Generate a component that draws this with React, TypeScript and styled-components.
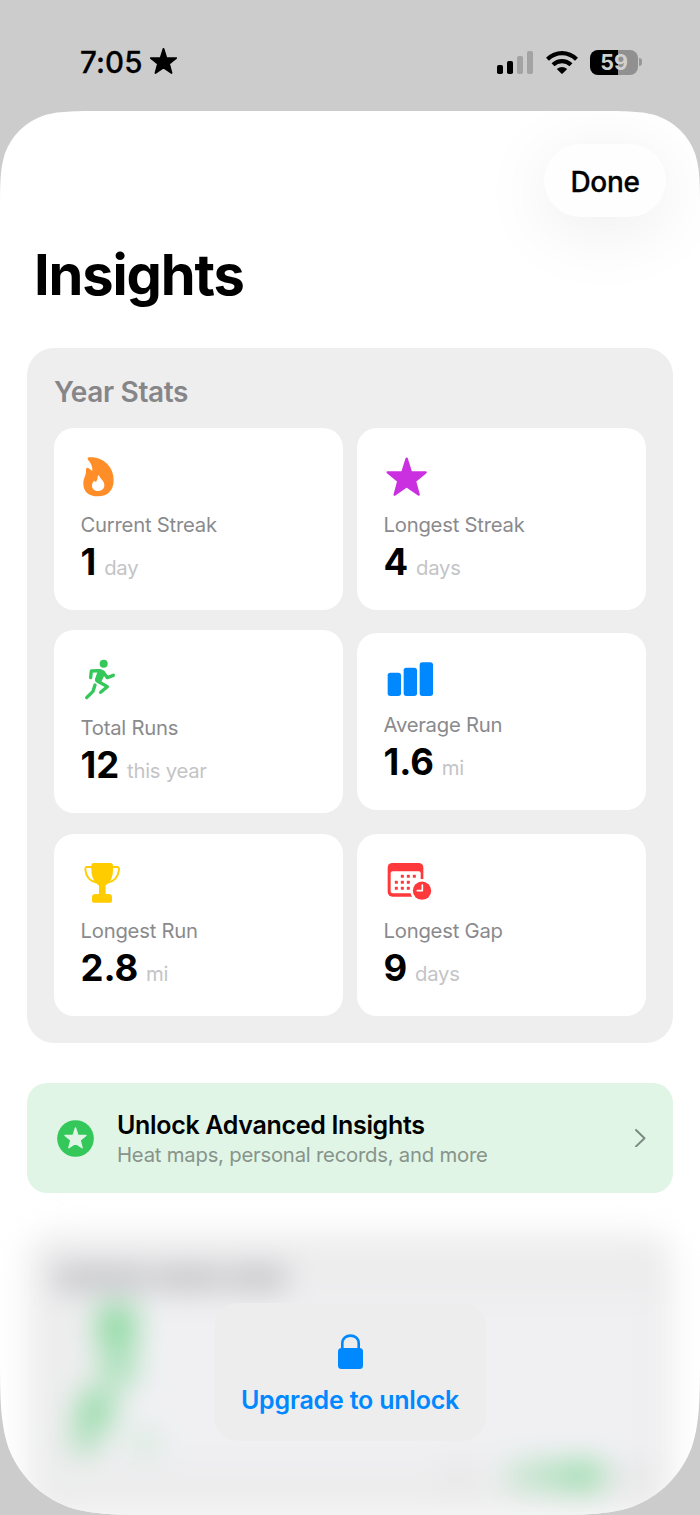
import React from 'react';
import styled, { createGlobalStyle } from 'styled-components';

const GlobalStyle = createGlobalStyle`
  * { box-sizing: border-box; }
  body {
    margin: 0;
    background: #ccc;
    font-family: Inter, "Liberation Sans", sans-serif;
    color: #000;
  }
`;

const Screen = styled.div`
  width: 700px;
  height: 1515px;
  overflow: hidden;
  background: #cccccc;
  display: flex;
  flex-direction: column;
`;

const StatusBar = styled.header`
  height: 111px;
  flex: none;
  display: flex;
  justify-content: space-between;
  padding: 42px 58px 29px 80px;
`;

const StatusGroup = styled.div<{ $gap: number }>`
  display: flex;
  align-items: center;
  height: 40px;
  gap: ${(p) => p.$gap}px;
`;

const TimeStar = styled.div`
  display: flex;
  margin-bottom: 2px;
`;

const Clock = styled.span`
  font-size: 29.5px;
  font-weight: 550;
  letter-spacing: 0.1px;
  line-height: 40px;
  -webkit-text-stroke: 0.3px #000;
`;

const Battery = styled.div`
  width: 48px;
  height: 25px;
  border-radius: 8px;
  background: linear-gradient(90deg, #000 28px, #909090 28px);
  color: #d0d0d0;
  font-size: 21.5px;
  font-weight: 700;
  line-height: 25px;
  text-align: center;
`;

const BatteryTip = styled.i`
  width: 3px;
  height: 8px;
  margin-left: 1px;
  border-radius: 0 3px 3px 0;
  background: #969696;
`;

const BatteryGroup = styled.div`
  display: flex;
  align-items: center;
`;

const Sheet = styled.main`
  width: 700px;
  height: 1404px;
  flex: none;
  background: #fff;
  padding: 33px 27px 0;
  display: flex;
  flex-direction: column;
  clip-path: path("M0 102.4 C0 72.9 0 58.2 5 42.3 C11.3 25 25 11.3 42.3 5 C58.2 0 72.9 0 102.4 0 H597.6 C627.1 0 641.8 0 657.7 5 C675 11.3 688.7 25 695 42.3 C700 58.2 700 72.9 700 102.4 V1239 C700 1286.4 700 1310.2 691.9 1335.8 C681.7 1363.7 659.7 1385.7 631.8 1395.9 C606.2 1404 582.4 1404 535 1404 H165 C117.6 1404 93.8 1404 68.2 1395.9 C40.3 1385.7 18.3 1363.7 8.1 1335.8 C0 1310.2 0 1286.4 0 1239 Z");
`;

const DoneButton = styled.button`
  align-self: flex-end;
  flex: none;
  width: 122px;
  height: 73px;
  margin-right: 7px;
  padding: 2px 0 0;
  border: 0;
  border-radius: 37px;
  background: #fefefe;
  box-shadow: 0 12px 72px rgba(0, 0, 0, 0.08);
  font: 550 28px/36px Inter, sans-serif;
  letter-spacing: -0.35px;
  -webkit-text-stroke: 0.3px #000;
  color: #000;
`;

const Title = styled.h1`
  margin: 24px 0 0 7px;
  font-size: 56px;
  font-weight: 700;
  line-height: 68px;
  letter-spacing: -1.15px;
`;

const Panel = styled.section`
  margin-top: 39px;
  height: 695px;
  flex: none;
  padding: 28px 27px 27px;
  border-radius: 27px;
  background: #eeeeee;
`;

const PanelTitle = styled.h2`
  margin: 0 0 19px;
  font-size: 28px;
  font-weight: 600;
  line-height: 33px;
  letter-spacing: -0.35px;
  color: #868689;
`;

const StatGrid = styled.div`
  display: grid;
  grid-template-columns: 1fr 1fr;
  column-gap: 14px;
  row-gap: 20.3px;
  align-items: center;
`;

const Card = styled.article`
  padding: 27px;
  border-radius: 20px;
  background: #fff;
`;

const IconBox = styled.div<{ $height: number }>`
  height: ${(p) => p.$height}px;
  margin-bottom: 16px;

  svg {
    display: block;
    overflow: visible;
  }
`;

const Label = styled.div`
  margin-left: -0.5px;
  font-size: 20.3px;
  line-height: 27px;
  letter-spacing: -0.24px;
  color: #8a8a8d;
`;

const ValueRow = styled.div`
  display: flex;
  align-items: baseline;
  gap: 8px;
  height: 42px;
  margin-top: 3px;
`;

const Value = styled.strong`
  margin-left: -0.5px;
  font-size: 36.5px;
  font-weight: 700;
  line-height: 43px;
  letter-spacing: -0.1px;
`;

const Unit = styled.span`
  font-size: 20.3px;
  line-height: 27px;
  letter-spacing: -0.26px;
  color: #c4c4c6;
`;

const Banner = styled.section`
  display: flex;
  align-items: center;
  height: 110px;
  flex: none;
  margin-top: 40px;
  padding: 0 27px 0 29.5px;
  border-radius: 20px;
  background: #e0f5e6;
`;

const BannerText = styled.div`
  flex: 1;
  margin-left: 23.5px;
  padding-top: 2px;
`;

const BannerTitle = styled.div`
  font-size: 25px;
  font-weight: 600;
  line-height: 32px;
  letter-spacing: -0.32px;
`;

const BannerNote = styled.div`
  font-size: 20.3px;
  line-height: 28px;
  letter-spacing: -0.22px;
  color: #87938b;
`;

const Locked = styled.section`
  display: grid;
  width: 646px;
  height: 286px;
  flex: none;
  margin-top: 40px;

  > * {
    grid-area: 1 / 1;
  }
`;

const Preview = styled.div`
  filter: blur(15px);
  background: #ededee;
  border-radius: 27px;
  overflow: hidden;

  svg {
    display: block;
  }
`;

const UnlockCard = styled.div`
  justify-self: center;
  align-self: start;
  position: relative;
  width: 272px;
  height: 138px;
  margin-top: 70px;
  padding-top: 31px;
  border-radius: 24px;
  background: #ededee;
  display: flex;
  flex-direction: column;
  align-items: center;
`;

const UnlockText = styled.div`
  margin-top: 15px;
  font-size: 25px;
  font-weight: 600;
  line-height: 32px;
  letter-spacing: -0.2px;
  white-space: nowrap;
  color: #0088ff;
`;

const starPoints =
  '170,357 183,398 227,398 195,424 206,465 170,440 134,465 145,424 113,398 157,398';

const Star = ({ width, color }: { width: number; color: string }) => (
  <svg width={width} height={(width * 116) / 121} viewBox="109.5 353 121 116">
    <polygon points={starPoints} fill={color} stroke={color} strokeWidth="8" strokeLinejoin="round" />
  </svg>
);

const FlameIcon = () => (
  <svg width="50" height="40" viewBox="183 345 150 120">
    <path
      fill="#ff8d28"
      fillRule="evenodd"
      d="M207 352 C249 349 281 380 281 420 C281 451 263 469 234 469 C206 469 190 454 190 431 C190 414 199 407 198 391 C197 383 203 381 208 386 L217 393 C218 380 213 370 205 361 C201 356 202 353 207 352 Z M236 406 C232 406 234 413 232 418 C230 423 228 426 227 426 L223 422 C219 425 216 430 216 437 C216 447 224 453 235 453 C246 453 253 446 253 436 C253 421 240 417 238 408 Z"
    />
  </svg>
);

const StarIcon = () => (
  <svg width="50" height="40" viewBox="102 346 150 120">
    <polygon points={starPoints} fill="#cb30e0" stroke="#cb30e0" strokeWidth="7" strokeLinejoin="round" />
  </svg>
);

const RunnerIcon = () => (
  <svg width="50" height="41" viewBox="183 112 150 123">
    <g fill="none" stroke="#34c759" strokeWidth="10" strokeLinecap="round" strokeLinejoin="round">
      <path d="M212 174 L214 154 L240 153 L250 158 L262 174 L280 167" />
      <path d="M232 184 L262 201 L242 218" />
      <path d="M225 196 L219 215 L200 234" />
    </g>
    <path d="M228 150 H246 Q257 155 254 165 L246 182 L242 190 Q222 188 225 178 L233 155 Z" fill="#34c759" />
    <circle cx="251" cy="132" r="12" fill="#34c759" />
  </svg>
);

const BarsIcon = () => (
  <svg width="50" height="35" viewBox="102 123 150 105" fill="#0088ff">
    <rect x="113" y="161" width="40" height="70" rx="8" />
    <rect x="161" y="146" width="40" height="85" rx="8" />
    <rect x="209" y="130" width="40" height="101" rx="8" />
  </svg>
);

const TrophyIcon = () => (
  <svg width="50" height="40" viewBox="183 123 150 120">
    <path
      fill="#ffcc00"
      d="M222 129 H271 Q279 129 279 138 C280 165 276 183 257 196 V222 H266 Q276 222 276 232 V243 Q276 248 271 248 H221 Q216 248 216 243 V232 Q216 222 227 222 H237 V197 C218 183 213 165 214 138 Q214 129 222 129 Z"
    />
    <path
      fill="none"
      stroke="#ffcc00"
      strokeWidth="5.5"
      d="M216 141 H202 Q195 141 196 149 C198 169 210 184 230 188 M277 141 H290 Q298 141 297 149 C295 169 283 184 263 188"
    />
  </svg>
);

const CalendarIcon = () => (
  <svg width="50" height="40" viewBox="102 124 150 120">
    <rect x="113" y="130" width="107" height="101" rx="14" fill="#ff383c" />
    <rect x="122" y="155" width="90" height="66" rx="6" fill="#fff" />
    <g fill="#ff383c">
      {[[157, 170], [175, 170], [193, 170], [139, 188], [157, 188], [175, 188], [139, 206], [157, 206], [175, 206]].map(
        ([x, y]) => (
          <rect key={`${x}-${y}`} x={x - 4.5} y={y - 4.5} width="9" height="9" rx="2" />
        ),
      )}
    </g>
    <circle cx="216" cy="213" r="35" fill="#fff" />
    <circle cx="216" cy="213" r="27.5" fill="#ff383c" />
    <path d="M217 196 V213 H202" fill="none" stroke="#fff" strokeWidth="5" strokeLinecap="round" strokeLinejoin="round" />
  </svg>
);

const SignalIcon = () => (
  <svg width="37" height="23" viewBox="0 0 37 23">
    <rect x="0" y="14" width="6" height="9" rx="1.8" />
    <rect x="10" y="10" width="6" height="13" rx="1.8" />
    <rect x="20" y="5" width="6" height="18" rx="1.8" fill="#a3a3a3" />
    <rect x="30" y="0" width="6" height="23" rx="1.8" fill="#a3a3a3" />
  </svg>
);

const WifiIcon = () => (
  <svg width="32" height="23" viewBox="0 0 32 23">
    <g fill="none" stroke="#000" strokeWidth="4.2">
      <path d="M1.5 8.3 C9.8 .1 22.2 .1 30.5 8.3" />
      <path d="M7 13.8 C12.2 8.8 19.8 8.8 25 13.8" />
    </g>
    <path d="M10.8 18 Q16 13.8 21.2 18 L16.7 22.5 Q16 23.1 15.3 22.5 Z" />
  </svg>
);

const BadgeIcon = () => (
  <svg width="37" height="37" viewBox="0 0 111 111">
    <circle cx="55.5" cy="55.5" r="55" fill="#34c759" />
    <polygon
      points={starPoints}
      transform="translate(55.5 55) scale(.55) translate(-170 -414)"
      fill="#e0f5e6"
      stroke="#e0f5e6"
      strokeWidth="8"
      strokeLinejoin="round"
    />
  </svg>
);

const ChevronIcon = () => (
  <svg width="11" height="18" viewBox="0 0 11 18">
    <path d="M1 1 L9.5 9.3 L1 17.4" fill="none" stroke="#7d8a82" strokeWidth="2" strokeLinecap="round" strokeLinejoin="round" />
  </svg>
);

const LockIcon = () => (
  <svg width="25" height="35" viewBox="0 0 25 35">
    <rect x="0" y="14" width="25" height="21" rx="3.5" fill="#0088ff" />
    <path d="M4.3 15 V9.5 C4.3 -1 20.7 -1 20.7 9.5 V15" fill="none" stroke="#0088ff" strokeWidth="2.6" />
  </svg>
);

const HeatMapPreview = () => (
  <svg width="646" height="286" viewBox="27 1233 646 286">
    <rect x="110" y="1304" width="540" height="156" fill="#f0f0f3" />
    <g fill="#c0c0c5">
      <rect x="55" y="1267" width="93" height="22" />
      <rect x="154" y="1267" width="68" height="22" />
      <rect x="228" y="1267" width="58" height="22" />
    </g>
    <g fill="#57ce75">
      <rect x="98" y="1306" width="38" height="34" opacity=".68" />
      <rect x="101" y="1340" width="34" height="46" opacity=".48" />
      <rect x="79" y="1392" width="34" height="34" opacity=".62" />
      <rect x="73" y="1426" width="24" height="26" opacity=".5" />
      <rect x="135" y="1432" width="22" height="22" opacity=".25" />
      <rect x="508" y="1463" width="32" height="25" opacity=".3" />
      <rect x="540" y="1463" width="30" height="25" opacity=".46" />
      <rect x="570" y="1463" width="32" height="25" opacity=".66" />
    </g>
    <rect x="445" y="1468" width="26" height="14" fill="#e0e0e1" />
    <rect x="615" y="1468" width="30" height="14" fill="#e0e0e1" />
  </svg>
);

const stats = [
  { label: 'Current Streak', value: '1', unit: 'day', icon: <FlameIcon />, height: 40 },
  { label: 'Longest Streak', value: '4', unit: 'days', icon: <StarIcon />, height: 39.5 },
  { label: 'Total Runs', value: '12', unit: 'this year', icon: <RunnerIcon />, height: 41 },
  { label: 'Average Run', value: '1.6', unit: 'mi', icon: <BarsIcon />, height: 35 },
  { label: 'Longest Run', value: '2.8', unit: 'mi', icon: <TrophyIcon />, height: 40.3 },
  { label: 'Longest Gap', value: '9', unit: 'days', icon: <CalendarIcon />, height: 39.7 },
];

export default function App() {
  return (
    <Screen>
      <GlobalStyle />
      <StatusBar>
        <StatusGroup $gap={8}>
          <Clock>7:05</Clock>
          <TimeStar>
            <Star width={27} color="#000" />
          </TimeStar>
        </StatusGroup>
        <StatusGroup $gap={12}>
          <SignalIcon />
          <WifiIcon />
          <BatteryGroup>
            <Battery>59</Battery>
            <BatteryTip />
          </BatteryGroup>
        </StatusGroup>
      </StatusBar>
      <Sheet>
        <DoneButton>Done</DoneButton>
        <Title>Insights</Title>
        <Panel>
          <PanelTitle>Year Stats</PanelTitle>
          <StatGrid>
            {stats.map((s) => (
              <Card key={s.label}>
                <IconBox $height={s.height}>{s.icon}</IconBox>
                <Label>{s.label}</Label>
                <ValueRow>
                  <Value>{s.value}</Value>
                  <Unit>{s.unit}</Unit>
                </ValueRow>
              </Card>
            ))}
          </StatGrid>
        </Panel>
        <Banner>
          <BadgeIcon />
          <BannerText>
            <BannerTitle>Unlock Advanced Insights</BannerTitle>
            <BannerNote>Heat maps, personal records, and more</BannerNote>
          </BannerText>
          <ChevronIcon />
        </Banner>
        <Locked>
          <Preview>
            <HeatMapPreview />
          </Preview>
          <UnlockCard>
            <LockIcon />
            <UnlockText>Upgrade to unlock</UnlockText>
          </UnlockCard>
        </Locked>
      </Sheet>
    </Screen>
  );
}
